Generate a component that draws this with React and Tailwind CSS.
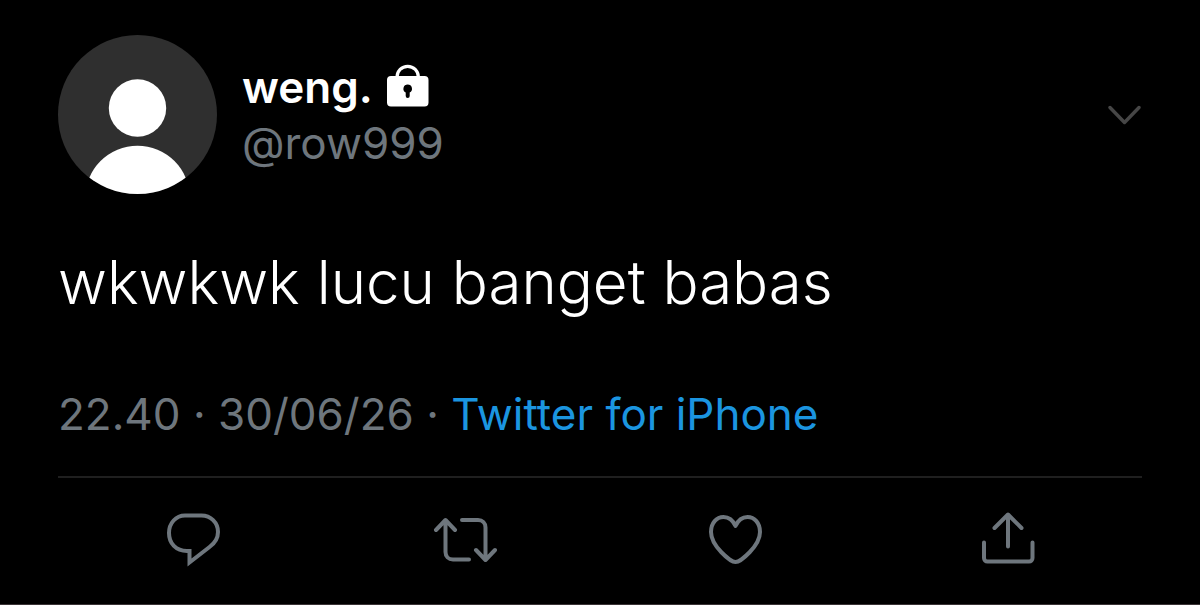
function Avatar() {
  return (
    <svg className="size-40 shrink-0" viewBox="0 0 160 160" role="img" aria-label="weng. profile picture">
      <defs>
        <clipPath id="avatar-clip">
          <circle cx="79.5" cy="79.5" r="79.5" />
        </clipPath>
      </defs>
      <g clipPath="url(#avatar-clip)">
        <rect width="160" height="160" fill="#2f2f2f" />
        <circle cx="79.5" cy="73" r="28.7" fill="#fff" />
        <circle cx="79.5" cy="163" r="52.3" fill="#fff" />
      </g>
    </svg>
  );
}

function LockIcon() {
  return (
    <svg className="h-[44px] w-[42px] overflow-visible" viewBox="0 0 42 44" role="img" aria-label="Protected account">
      <path d="M10 13v-1a10.700 10.700 0 0 1 21.400 0v1" fill="none" stroke="#fff" strokeWidth="3.2" />
      <path
        fillRule="evenodd"
        fill="#fff"
        d="M4 11h33.500a4 4 0 0 1 4 4v22.500a4 4 0 0 1-4 4H4a4 4 0 0 1-4-4V15a4 4 0 0 1 4-4ZM20.700 19.500a4.300 4.300 0 0 0-2 8.100V31a2 2 0 0 0 4 0v-3.400a4.300 4.300 0 0 0-2-8.100Z"
      />
    </svg>
  );
}

function Action({ label, children }) {
  return (
    <button type="button" aria-label={label} className="flex justify-center">
      <svg
        className="h-14 w-16"
        viewBox="0.5 0.5 64 56"
        fill="none"
        stroke="#6e767d"
        strokeWidth="4"
        strokeLinecap="round"
        strokeLinejoin="round"
      >
        {children}
      </svg>
    </button>
  );
}

export default function App() {
  return (
    <main className="min-h-screen border-b border-[#3a3336] bg-black px-[58px] pt-[35px] font-['Inter',sans-serif]">
      <article>
        <header className="flex items-start">
          <Avatar />
          <div className="ml-6 grow pt-6">
            <div className="flex items-center gap-3.5 text-[44px] leading-14 font-semibold text-white">
              <h1>weng.</h1>
              <LockIcon />
            </div>
            <p className="text-[44px] leading-14 text-[#6e767d]">@row999</p>
          </div>
          <button type="button" aria-label="More options" className="mt-[60px]">
            <svg
              className="h-10 w-[34px]"
              viewBox="0 0 34 40"
              fill="none"
              stroke="#464646"
              strokeWidth="3.4"
              strokeLinecap="round"
              strokeLinejoin="round"
            >
              <path d="M2 12.500L16.500 27.500L31 12.500" />
            </svg>
          </button>
        </header>
        <p className="mt-[47px] text-[60px] leading-20 font-light text-white">wkwkwk lucu banget babas</p>
        <p className="mt-16 text-[44px] leading-14 text-[#6e767d]">
          22.40 · 30/06/26 ·{" "}
          <a href="#source" className="text-[#1b95e0]">
            Twitter for iPhone
          </a>
        </p>
        <div className="mt-[34px] grid grid-cols-4 border-t-2 border-[#1f1f1f] pt-[34px]">
          <Action label="Reply">
            <path strokeLinejoin="miter" d="M23.500 4h16.500C49 4 56.500 11 56.500 20.500C56.500 27 53.500 31.500 48 35.500L28 51V39.500H25.500C14.500 39.500 7.500 32 7.500 21.500C7.500 11.500 14.500 4 23.500 4Z" />
          </Action>
          <Action label="Retweet">
            <path d="M3.500 18.500L13 8.500L22.500 18.500M13 9V40.500C13 45 16 48 20.500 48H36.500M29.500 8.500H45.500C50 8.500 53 11.500 53 16V47.500M43.500 38.500L53 48.500L62.500 38.500" />
          </Action>
          <Action label="Like">
            <path d="M32 50.500C27 50.500 7.500 34.500 7.500 20.500C7.500 11.500 13 5.500 20 5.500C25.500 5.500 29.500 9 32 14.500C34.500 9 38.500 5.500 44 5.500C51 5.500 56.500 11.500 56.500 20.500C56.500 34.500 37 50.500 32 50.500Z" />
          </Action>
          <Action label="Share">
            <path d="M20 16.500L33.500 3L47 16.500M33.500 4V35M9.500 31V46.500C9.500 48.500 11 50 13 50H54.500C56.500 50 58 48.500 58 46.500V31" />
          </Action>
        </div>
      </article>
    </main>
  );
}
